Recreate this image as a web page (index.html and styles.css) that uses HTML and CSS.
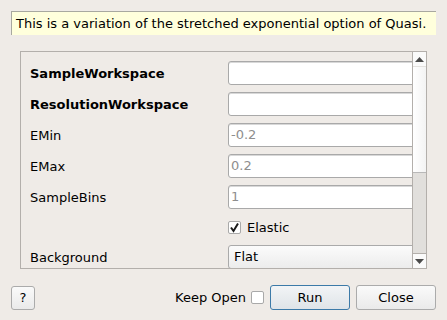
FILE: index.html
```html
<!doctype html>
<html lang="en">
<head>
  <meta charset="UTF-8">
  <title>Algorithm dialog</title>
  <link rel="stylesheet" href="styles.css">
</head>
<body>
  <div class="dialog">
    <div class="tooltip">This is a variation of the stretched exponential option of Quasi.</div>

    <div class="scroll-area">
      <div class="props">
        <div class="prop-label required">SampleWorkspace</div>
        <div class="field"><div class="input"></div></div>

        <div class="prop-label required">ResolutionWorkspace</div>
        <div class="field"><div class="input"></div></div>

        <div class="prop-label">EMin</div>
        <div class="field"><div class="input default">-0.2</div></div>

        <div class="prop-label">EMax</div>
        <div class="field"><div class="input default">0.2</div></div>

        <div class="prop-label">SampleBins</div>
        <div class="field"><div class="input default">1</div></div>

        <div class="prop-label"></div>
        <div class="field check-row">
          <span class="check-box checked">
            <svg width="11" height="11" viewBox="0 0 11 11"><path d="M2 5.5 L4.5 9 L9 1.5" fill="none" stroke="#1a1a1a" stroke-width="2"/></svg>
          </span>
          <span>Elastic</span>
        </div>

        <div class="prop-label">Background</div>
        <div class="field"><div class="combo">Flat</div></div>
      </div>

      <div class="scrollbar">
        <div class="sb-button sb-up">
          <svg width="9" height="5" viewBox="0 0 9 5"><path d="M0 5 L4.5 0 L9 5 Z" fill="#4a4a4a"/></svg>
        </div>
        <div class="sb-handle"></div>
        <div class="sb-groove"></div>
        <div class="sb-button sb-down">
          <svg width="9" height="5" viewBox="0 0 9 5"><path d="M0 0 L9 0 L4.5 5 Z" fill="#4a4a4a"/></svg>
        </div>
      </div>
    </div>

    <div class="footer">
      <button class="btn help-btn">?</button>
      <div class="spacer"></div>
      <label class="keep-open">Keep Open <span class="check-box"></span></label>
      <button class="btn run-btn">Run</button>
      <button class="btn">Close</button>
    </div>
  </div>
</body>
</html>
```

FILE: styles.css
```css
body {
  margin: 0;
  width: 447px;
  height: 320px;
  background: #efebe7;
  font-family: 'DejaVu Sans', sans-serif;
  font-size: 13px;
  color: #000000;
  overflow: hidden;
}

.dialog {
  display: flex;
  flex-direction: column;
  padding: 11px 11px 0 11px;
}

.tooltip {
  height: 23px;
  line-height: 23px;
  padding-left: 4px;
  background: #ffffdc;
  border-top: 1px solid #a8a8a0;
  border-left: 1px solid #a8a8a0;
  white-space: nowrap;
}

/* zone défilante des propriétés */
.scroll-area {
  margin: 16px 0 0 9px;
  width: 405px;
  height: 216px;
  border: 1px solid #b3afab;
  display: flex;
  overflow: hidden;
}

.props {
  flex: 1;
  display: grid;
  grid-template-columns: 198px 1fr;
  grid-template-rows: repeat(5, 24px) 22px 24px;
  row-gap: 7px;
  padding: 9px 0 0 9px;
  overflow: hidden;
}

.prop-label {
  display: flex;
  align-items: center;
}

.prop-label.required {
  font-weight: bold;
}

.field {
  width: 200px;
  display: flex;
  align-items: center;
}

.input {
  box-sizing: border-box;
  width: 100%;
  height: 24px;
  line-height: 22px;
  padding-left: 2px;
  background: #ffffff;
  border: 1px solid #a9a9a9;
  border-radius: 3px;
  box-shadow: inset 0 1px 0 #d8d8d8;
}

.input.default {
  color: #8e8e8e;
}

.check-row {
  gap: 6px;
}

.check-box {
  box-sizing: border-box;
  display: inline-flex;
  align-items: center;
  justify-content: center;
  width: 13px;
  height: 13px;
  background: #ffffff;
  border: 1px solid #a9a9a9;
  border-radius: 2px;
}

.combo {
  box-sizing: border-box;
  width: 100%;
  height: 24px;
  line-height: 22px;
  padding-left: 5px;
  background: linear-gradient(#fbfbfb, #ececec);
  border: 1px solid #aaaaaa;
  border-radius: 3px;
}

.scrollbar {
  width: 13px;
  border-left: 1px solid #b3afab;
  display: flex;
  flex-direction: column;
}

.sb-button {
  height: 14px;
  display: flex;
  align-items: center;
  justify-content: center;
  background: #fafafa;
}

.sb-up {
  border-bottom: 1px solid #e4e2df;
}

.sb-down {
  border-top: 1px solid #b3afab;
}

.sb-handle {
  height: 105px;
  background: linear-gradient(90deg, #ffffff, #f3f3f3);
  border-bottom: 1px solid #b8b8b8;
}

.sb-groove {
  flex: 1;
  background: #e1dfdc;
}

.footer {
  display: flex;
  align-items: center;
  margin-top: 16px;
  height: 25px;
}

.spacer {
  flex: 1;
}

.btn {
  box-sizing: border-box;
  width: 80px;
  height: 25px;
  font-family: 'DejaVu Sans', sans-serif;
  font-size: 13px;
  color: #000000;
  background: linear-gradient(#fafafa, #eaeaea);
  border: 1px solid #ababab;
  border-radius: 3px;
  padding: 0;
}

.help-btn {
  width: 24px;
  height: 24px;
}

.run-btn {
  border-color: #3c7aa8;
  background: linear-gradient(#f2f4f6, #dfe4e8);
  margin: 0 6px 0 6px;
}

.keep-open {
  display: flex;
  align-items: center;
  gap: 5px;
}
```
